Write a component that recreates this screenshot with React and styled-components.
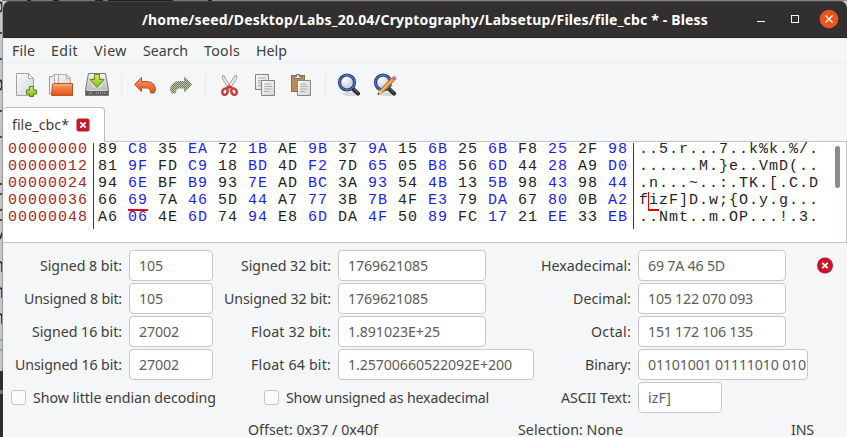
import React, { useLayoutEffect, useRef, useState } from "react";
import styled, { createGlobalStyle } from "styled-components";

const GlobalStyle = createGlobalStyle`
  * { box-sizing: border-box; }
  body { margin: 0; overflow: hidden; font-family: "Noto Sans", "Open Sans", sans-serif; }
`;

const Desktop = styled.div`
  display: flex;
  width: 847px;
  height: 437px;
  background: #c9c9c9;
  overflow: hidden;
`;
const BehindStrip = styled.div`
  flex: none;
  width: 3px;
  height: 437px;
  overflow: hidden;
`;
const MainColumn = styled.div`
  flex: none;
  width: 844px;
  height: 437px;
  overflow: hidden;
`;
const TopSliver = styled.div`
  height: 1px;
  background: linear-gradient(90deg, #777 0 24px, #222 24px 28px, #777 28px 50px, #222 50px 56px, #777 56px 92px, #222 92px 100px, #777 100px 105px, #222 105px 170px, #777 170px 205px, #222 205px 209px, #888 209px);
`;
const Window = styled.div`
  display: flex;
  flex-direction: column;
  height: 436px;
  background: #f5f6f7;
  border-radius: 7px 7px 0 0;
  overflow: hidden;
  color: #3d3d3d;
`;
const TitleBar = styled.header`
  flex: none;
  display: grid;
  grid-template-columns: 139px 566px 1fr;
  align-items: center;
  height: 37px;
  background: #322f30;
  border-bottom: 1px solid #242122;
  border-top: 1px solid #454243;
  color: #fff;
  font-weight: 700;
`;
const WindowButtons = styled.div`
  display: flex;
  justify-content: flex-end;
  padding: 0 8px 2px 0;
`;
const MenuBar = styled.nav`
  flex: none;
  display: flex;
  gap: 16px;
  align-items: center;
  height: 25px;
  padding: 2px 0 0 9px;
  border-bottom: 1px solid #ebedef;
`;
const ToolBar = styled.div`
  flex: none;
  display: flex;
  align-items: center;
  gap: 12px;
  height: 44px;
  padding-left: 10px;
`;
const ToolGroup = styled.div`
  display: flex;
  gap: 12px;
`;
const ToolSeparator = styled.div`
  width: 1px;
  height: 22px;
  margin: 0 -1px 0 0;
  background: #e6e8eb;
`;
const Icon = styled.svg`
  display: block;
  flex: none;
  width: ${(p) => p.$size || 24}px;
  height: ${(p) => p.$size || 24}px;
`;
const Tab = styled.div`
  flex: none;
  display: flex;
  align-items: center;
  justify-content: space-between;
  width: 102px;
  height: 35px;
  margin-bottom: -1px;
  padding: 0 14px 0 9px;
  background: #fff;
  border: 1px solid #b9bbbe;
  border-left: 0;
  border-bottom: 0;
  border-radius: 4px 4px 0 0;
  z-index: 1;
`;
const HexView = styled.div`
  flex: none;
  display: flex;
  height: 102px;
  background: #fff;
  border: 1px solid #bfc5cb;
  border-left: 0;
  font: 15px/17px "Liberation Mono", monospace;
  color: #1e1e1e;
`;
const Pane = styled.div`
  flex: none;
  width: ${(p) => p.$width}px;
  height: 86px;
  margin-top: 1px;
  padding-left: ${(p) => p.$pad}px;
  border-right: ${(p) => (p.$rule ? "1px solid #006400" : "0")};
`;
const Lines = styled.div`
  margin-top: -2px;
  letter-spacing: 1px;
  color: ${(p) => p.$color || "inherit"};
`;
const Line = styled.div`
  height: 17px;
  white-space: pre;
`;
const ByteLine = styled.div`
  display: grid;
  grid-template-columns: repeat(18, 30px);
  height: 17px;
`;
const Byte = styled.span`
  position: relative;
  width: 20px;
  color: ${(p) => (p.$odd ? "#1c1cf2" : "inherit")};
  &::after {
    content: "";
    display: ${(p) => (p.$marked ? "block" : "none")};
    position: absolute;
    left: 0;
    top: 17px;
    width: 20px;
    height: 2px;
    background: #f00000;
  }
`;
const CaretChar = styled.span`
  position: relative;
  &::after {
    content: "";
    position: absolute;
    left: -1px;
    top: 0;
    width: 10px;
    height: 17px;
    border-left: 1px solid #f00000;
    border-bottom: 2px solid #f00000;
  }
`;
const ScrollThumb = styled.div`
  width: 5px;
  height: 42px;
  margin: 4px 0 0 18px;
  border-radius: 3px;
  background: #8b8b8b;
`;
const Form = styled.div`
  flex: none;
  display: grid;
  grid-template-columns: 119px 84px 111px 196px 90px 170px 20px;
  grid-auto-rows: 31px;
  column-gap: 7px;
  row-gap: 2px;
  align-items: center;
  margin-top: 7px;
`;
const Label = styled.label`
  justify-self: end;
`;
const Field = styled.div`
  width: ${(p) => p.$width}px;
  height: 31px;
  padding: 0 2px 0 9px;
  display: flex;
  align-items: center;
  background: #fff;
  border: 1px solid #c4c7cc;
  border-radius: 4px;
  color: #5c5c5c;
`;
const CheckRow = styled.label`
  grid-column: span 2;
  display: flex;
  align-items: center;
  gap: 7px;
  padding-left: ${(p) => p.$pad}px;
`;
const CheckBox = styled.span`
  flex: none;
  width: 15px;
  height: 15px;
  border: 1px solid #c4c7cc;
  border-radius: 3px;
  background: #fafbfb;
`;
const Run = styled.span`
  display: block;
  flex: none;
  width: ${(p) => p.$width}px;
  font-size: ${(p) => p.$size}px;
  line-height: 20px;
  white-space: pre;
`;
const StatusBar = styled.footer`
  flex: none;
  display: grid;
  grid-template-columns: 270px 273px 1fr;
  height: 24px;
  padding: 10px 0 0 245px;
  ${Run} { line-height: 14px; }
`;

// Text justified to a given advance width through its letter spacing.
function Fit({ w, size = 14.2, children }) {
  const ref = useRef(null);
  const [spacing, setSpacing] = useState(0);
  useLayoutEffect(() => {
    const range = document.createRange();
    range.selectNodeContents(ref.current);
    const natural = range.getBoundingClientRect().width;
    setSpacing((w - natural) / children.length);
  }, [w, children]);
  return (
    <Run ref={ref} $width={w} $size={size} style={{ letterSpacing: spacing }}>
      {children}
    </Run>
  );
}

const Gradients = () => (
  <defs>
    <linearGradient id="paper" x1="0" y1="0" x2="1" y2="1"><stop stopColor="#fbfbfb" /><stop offset="1" stopColor="#d4d4d4" /></linearGradient>
    <linearGradient id="orange" x1="0" y1="0" x2="0" y2="1"><stop stopColor="#f3a169" /><stop offset="1" stopColor="#e2501c" /></linearGradient>
    <linearGradient id="metal" x1="0" y1="0" x2="0" y2="1"><stop stopColor="#f4f4f4" /><stop offset="1" stopColor="#a9a9a9" /></linearGradient>
    <linearGradient id="lime" x1="0" y1="0" x2="0" y2="1"><stop stopColor="#d5ec6a" /><stop offset="1" stopColor="#84b81b" /></linearGradient>
    <radialGradient id="glass" cx=".35" cy=".3"><stop stopColor="#fff" /><stop offset="1" stopColor="#cfd5dc" /></radialGradient>
    <pattern id="weave" width="2" height="2" patternUnits="userSpaceOnUse"><rect width="2" height="2" fill="#c3cbab" /><path d="M0 0h1v1H0zM1 1h1v1H1z" fill="#68745a" /></pattern>
  </defs>
);

const NewIcon = () => (
  <Icon viewBox="0 0 24 24">
    <Gradients />
    <path d="M3.500 .5h12l5 5v17h-17z" fill="url(#paper)" stroke="#a3a3a3" />
    <path d="M15.500 .5v5h5z" fill="#fff" stroke="#a3a3a3" />
    <path d="M16.500 13.500h4v3.500h3v4h-3v2.500h-4v-2.500h-3v-4h3z" fill="url(#lime)" stroke="#4c8211" />
  </Icon>
);
const OpenIcon = () => (
  <Icon viewBox="0 0 24 24">
    <path d="M.5 21V3.500h3l1-1.500h5V21z" fill="#ececec" stroke="#999" />
    <path d="M5.500 1.500h12l4 4V16h-16z" fill="url(#paper)" stroke="#aaa" />
    <path d="M9.500 1.500h8l4 4V16h-12zM17.500 1.500v4h4" fill="none" stroke="#b0b0b0" />
    <path d="M3.500 11.500l1-1h19v12H2.500z" fill="url(#orange)" stroke="#c84f1c" />
    <path d="M4.500 12h18" stroke="#f8bc91" />
  </Icon>
);
const SaveIcon = () => (
  <Icon viewBox="0 0 24 24">
    <path d="M3.500 .5h17l3 16v6H.5v-6z" fill="url(#metal)" stroke="#777" />
    <path d="M1 17.500h22v4.500H1z" fill="#5e5e5e" />
    <path d="M2 17.500h20" stroke="#ddd" />
    <path d="M11 20h9" stroke="#bbb" strokeDasharray="1 1" />
    <path d="M4 20h3" stroke="#aaa" />
    <ellipse cx="12" cy="10" rx="7" ry="6" fill="#d8d8d8" stroke="#bbb" strokeWidth=".5" />
    <path d="M9.500 1.500h5v5h4.500L12 14.500 5 6.500h4.500z" fill="url(#lime)" stroke="#5b9116" />
  </Icon>
);
const arrow = "M1.500 11.500L8.500 4.500v4h5.500c5 0 8.500 3.500 8.500 8.500l-1.500 3h-3.500c0-3.500-1.500-5-4-5H8.500v3.500z";
const UndoIcon = () => (
  <Icon viewBox="0 0 24 24"><path d={arrow} fill="url(#orange)" stroke="#bf5426" strokeLinejoin="round" /></Icon>
);
const RedoIcon = () => (
  <Icon viewBox="0 0 24 24"><path d={arrow} transform="translate(24 0) scale(-1 1)" fill="url(#weave)" stroke="url(#weave)" strokeLinejoin="round" /></Icon>
);
const CutIcon = () => (
  <Icon viewBox="0 0 24 24">
    <path d="M6.500 2c-2 2-1 4 0 5.500L12 16l1.500-2z" fill="#ededed" stroke="#8a8f89" strokeWidth=".9" />
    <path d="M18.500 2c2 2 1 4 0 5.500L12.500 16 10.500 14z" fill="#ededed" stroke="#8a8f89" strokeWidth=".9" />
    <g fill="none" stroke="#cc3b3b" strokeWidth="2.500"><ellipse cx="8" cy="18.700" rx="2.600" ry="3.300" transform="rotate(25 8 18.700)" /><ellipse cx="17" cy="18.700" rx="2.600" ry="3.300" transform="rotate(-25 17 18.700)" /><path d="M9.500 15l3-1.500 3 1.500" /></g>
  </Icon>
);
const Sheet = ({ x, y }) => (
  <g transform={`translate(${x} ${y})`}>
    <path d="M.5 .5h13v15H.5z" fill="url(#paper)" stroke="#858585" />
    <path d="M3 4h7M3 6.500h8M3 9h7M3 11.500h5" stroke="#aaa" />
  </g>
);
const CopyIcon = () => (
  <Icon viewBox="0 0 24 24"><Sheet x={2} y={1} /><Sheet x={8} y={7} /></Icon>
);
const PasteIcon = () => (
  <Icon viewBox="0 0 24 24">
    <rect x="2.500" y="2.500" width="13" height="16" fill="#b78c55" stroke="#94703f" />
    <path d="M5.500 5.500v-2h2v-2h3v2h2v2z" fill="#ddd" stroke="#737373" />
    <Sheet x={8} y={7} />
  </Icon>
);
const Lens = () => (
  <>
    <ellipse cx="14" cy="21" rx="8" ry="2" fill="#000" opacity=".12" />
    <path d="M15.500 15.500l5.500 5" stroke="#2d2d2d" strokeWidth="4.200" strokeLinecap="round" />
    <path d="M16 15l5 4.500" stroke="#777" strokeWidth="1" />
    <circle cx="10" cy="9.500" r="7.500" fill="url(#glass)" stroke="#253b80" strokeWidth="3.200" />
    <circle cx="10" cy="9.500" r="7.500" fill="none" stroke="#6d8bd0" strokeWidth="1" />
  </>
);
const FindIcon = () => <Icon viewBox="0 0 24 24"><Lens /></Icon>;
const ReplaceIcon = () => (
  <Icon viewBox="0 0 24 24">
    <Lens />
    <path d="M5 21.500l1.500-4L18.500 5l3 2.500L9.500 19.500z" fill="#f39a32" stroke="#a8651d" strokeWidth=".8" />
    <path d="M8 18L20 6" stroke="#ffc57b" />
    <path d="M18 5.500l2-2c1.500-1 4 1 3 3l-2 1.500z" fill="#e16b6b" stroke="#aaa" strokeWidth=".6" />
    <path d="M5 21.500l1.500-4 2.500 2z" fill="#f4e1b8" /><path d="M4.300 22l1-2.200 1.200 1z" fill="#222" />
  </Icon>
);

const tools = [
  [NewIcon, OpenIcon, SaveIcon],
  [UndoIcon, RedoIcon],
  [CutIcon, CopyIcon, PasteIcon],
  [FindIcon, ReplaceIcon],
];
const menus = [["File", 23], ["Edit", 27], ["View", 33], ["Search", 45], ["Tools", 36], ["Help", 31]];
const offsets = ["00000000", "00000012", "00000024", "00000036", "00000048"];
const bytes = [
  "89 C8 35 EA 72 1B AE 9B 37 9A 15 6B 25 6B F8 25 2F 98",
  "81 9F FD C9 18 BD 4D F2 7D 65 05 B8 56 6D 44 28 A9 D0",
  "94 6E BF B9 93 7E AD BC 3A 93 54 4B 13 5B 98 43 98 44",
  "66 69 7A 46 5D 44 A7 77 3B 7B 4F E3 79 DA 67 80 0B A2",
  "A6 06 4E 6D 74 94 E8 6D DA 4F 50 89 FC 17 21 EE 33 EB",
];
const chars = ["..5.r...7..k%k.%/.", "......M.}e..VmD(..", ".n...~..:.TK.[.C.D", "fizF]D.w;{O.y.g...", "..Nmt..m.OP...!.3."];

// Each entry: label, label width, value, value width, field width.
const rows = [
  [["Signed 8 bit:", 82, "105", 24, 84], ["Signed 32 bit:", 90, "1769621085", 80, 148], ["Hexadecimal:", 90, "69 7A 46 5D", 77, 148]],
  [["Unsigned 8 bit:", 98, "105", 24, 84], ["Unsigned 32 bit:", 107, "1769621085", 80, 148], ["Decimal:", 58, "105 122 070 093", 105, 148]],
  [["Signed 16 bit:", 90, "27002", 40, 84], ["Float 32 bit:", 80, "1.891023E+25", 92, 148], ["Octal:", 40, "151 172 106 135", 105, 148]],
  [["Unsigned 16 bit:", 107, "27002", 40, 84], ["Float 64 bit:", 80, "1.25700660522092E+200", 164, 196], ["Binary:", 46, "01101001 01111010 010", 158, 170]],
];

const Entry = ({ data: [label, lw, value, vw, fw] }) => (
  <>
    <Label><Fit w={lw}>{label}</Fit></Label>
    <Field $width={fw}><Fit w={vw}>{value}</Fit></Field>
  </>
);

const Backdrop = () => (
  <svg width="3" height="437" viewBox="0 0 3 437">
    <rect width="3" height="371" fill="#c6c6c6" />
    <rect y="371" width="3" height="66" fill="#2f2f2f" />
    <rect y="390" width="3" height="4" fill="#777" />
    <g fill="none" stroke="#222" strokeWidth="1.500">
      <path d="M0 2q2 1 2 5t-2 5M0 80q2 1 2 5t-2 5M0 33h2.500M0 59h2.500M0 111h2.500M0 137h2.500M0 184h2l1-2M0 194h2.500M0 210h2l1-3M0 220h2.500M0 239l2.500-7M0 262q2 0 2 4v6M0 288q2 0 2 4v6M0 314q2 0 2 4v6" />
    </g>
    <path d="M0 340h3M0 350h3" stroke="#258f90" />
    <path d="M2.500 0v371" stroke="#999" strokeWidth="1" />
  </svg>
);

export default function App() {
  return (
    <Desktop>
      <GlobalStyle />
      <BehindStrip><Backdrop /></BehindStrip>
      <MainColumn>
        <TopSliver />
        <Window>
          <TitleBar>
            <span />
            <Fit w={566} size={14}>/home/seed/Desktop/Labs_20.04/Cryptography/Labsetup/Files/file_cbc * - Bless</Fit>
            <WindowButtons>
              <svg width="83" height="20" viewBox="0 0 83 20">
                <path d="M1 12.500h8" stroke="#fff" />
                <rect x="35.500" y="6.500" width="7" height="7" fill="none" stroke="#fff" />
                <circle cx="73" cy="10" r="9.300" fill="#e95420" />
                <path d="M69.500 6.500l7 7m0-7l-7 7" stroke="#fff" strokeWidth="1.300" />
              </svg>
            </WindowButtons>
          </TitleBar>
          <MenuBar>
            {menus.map(([name, w]) => <Fit key={name} w={w}>{name}</Fit>)}
          </MenuBar>
          <ToolBar>
            {tools.map((group, i) => (
              <React.Fragment key={i}>
                {i > 0 && <ToolSeparator />}
                <ToolGroup>{group.map((Tool, n) => <Tool key={n} />)}</ToolGroup>
              </React.Fragment>
            ))}
          </ToolBar>
          <Tab>
            <Fit w={57}>file_cbc*</Fit>
            <Icon $size={14} viewBox="0 0 14 14">
              <rect x=".5" y=".5" width="13" height="13" rx="2.500" fill="#c7162b" />
              <path d="M4.300 4.300l5.400 5.400m0-5.400l-5.400 5.400" stroke="#fff" strokeWidth="1.900" />
            </Icon>
          </Tab>
          <HexView>
            <Pane $width={91} $pad={5} $rule>
              <Lines $color="#a02828">{offsets.map((o) => <Line key={o}>{o}</Line>)}</Lines>
            </Pane>
            <Pane $width={540} $pad={4} $rule>
              <Lines>
                {bytes.map((line, r) => (
                  <ByteLine key={r}>
                    {line.split(" ").map((b, c) => <Byte key={c} $odd={c % 2 === 1} $marked={r === 3 && c === 1}>{b}</Byte>)}
                  </ByteLine>
                ))}
              </Lines>
            </Pane>
            <Pane $width={183} $pad={5}>
              <Lines>
                {chars.map((line, r) => (
                  <Line key={r}>
                    {r === 3 ? <>f<CaretChar>i</CaretChar>{line.slice(2)}</> : line}
                  </Line>
                ))}
              </Lines>
            </Pane>
            <ScrollThumb />
          </HexView>
          <Form>
            {rows.map((row, r) => (
              <React.Fragment key={r}>
                {row.map((entry) => <Entry key={entry[0]} data={entry} />)}
                {r === 0 ? (
                  <Icon $size={20} viewBox="0 0 20 20">
                    <circle cx="10" cy="9.500" r="8" fill="#c7162b" />
                    <path d="M7.300 6.800l5.400 5.400m0-5.400l-5.400 5.400" stroke="#fff" strokeWidth="1.900" />
                  </Icon>
                ) : <span />}
              </React.Fragment>
            ))}
            <CheckRow $pad={8}><CheckBox /><Fit w={183}>Show little endian decoding</Fit></CheckRow>
            <CheckRow $pad={44}><CheckBox /><Fit w={203}>Show unsigned as hexadecimal</Fit></CheckRow>
            <Entry data={["ASCII Text:", 70, "izF]", 23, 84]} />
          </Form>
          <StatusBar>
            <Fit w={130}>Offset: 0x37 / 0x40f</Fit>
            <Fit w={105}>Selection: None</Fit>
            <Fit w={23}>INS</Fit>
          </StatusBar>
        </Window>
      </MainColumn>
    </Desktop>
  );
}
